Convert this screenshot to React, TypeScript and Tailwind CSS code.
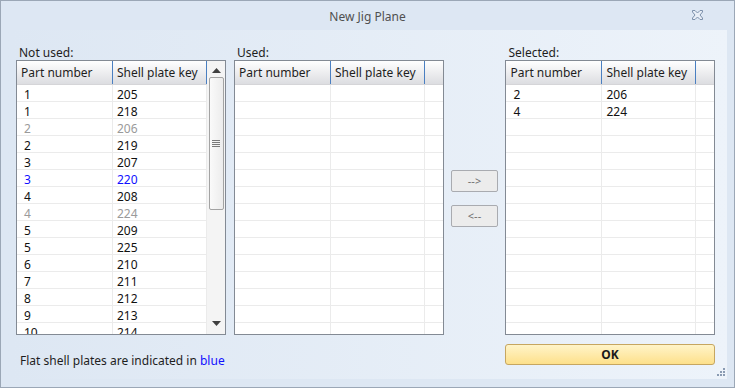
const notUsed: [string, string, string][] = [
  ["1", "205", "n"],
  ["1", "218", "n"],
  ["2", "206", "g"],
  ["2", "219", "n"],
  ["3", "207", "n"],
  ["3", "220", "b"],
  ["4", "208", "n"],
  ["4", "224", "g"],
  ["5", "209", "n"],
  ["5", "225", "n"],
  ["6", "210", "n"],
  ["7", "211", "n"],
  ["8", "212", "n"],
  ["9", "213", "n"],
  ["10", "214", "n"],
];

const selected: [string, string, string][] = [
  ["2", "206", "n"],
  ["4", "224", "n"],
];

const tone = (t: string) =>
  t === "g" ? "text-[#9a9a9a]" : t === "b" ? "text-[#1010ff]" : "text-[#111]";

const Header = ({ extra }: { extra: boolean }) => (
  <div className="flex h-[24px] shrink-0 bg-gradient-to-b from-white to-[#dcdde1] border-b border-[#d5d5d8]">
    <div className="w-[96px] border-r border-[#4a7fc1] pl-[4px] flex items-center">Part number</div>
    <div className="w-[94px] border-r border-[#4a7fc1] pl-[4px] flex items-center">Shell plate key</div>
    {extra && <div className="flex-1" />}
  </div>
);

const Rows = ({ rows, count }: { rows: [string, string, string][]; count: number }) => (
  <div className="flex-1 overflow-hidden">
    {Array.from({ length: count }).map((_, i) => {
      const r = rows[i];
      return (
        <div key={i} className={`flex h-[17px] border-b border-[#ebebeb] ${r ? tone(r[2]) : ""}`}>
          <div className="w-[96px] border-r border-[#ebebeb] pl-[7px] pt-[2px] leading-[16px]">{r?.[0]}</div>
          <div className="w-[94px] border-r border-[#ebebeb] pl-[4px] pt-[2px] leading-[16px]">{r?.[1]}</div>
          <div className="flex-1" />
        </div>
      );
    })}
  </div>
);

const Grid = ({ label, rows, scroll }: { label: string; rows: [string, string, string][]; scroll?: boolean }) => (
  <div className="flex flex-col w-[210px]">
    <div className="h-[16px] pl-[3px] pt-[1px] leading-[16px] text-[#1e1e1e]">{label}</div>
    <div className="h-[275px] border border-[#838a94] bg-white flex overflow-hidden">
      <div className="flex-1 flex flex-col">
        <Header extra={!scroll} />
        <Rows rows={rows} count={15} />
      </div>
      {scroll && (
        <div className="w-[19px] bg-[#f4f4f4] flex flex-col items-center">
          <svg width="9" height="5" className="mt-[7px]" viewBox="0 0 9 5">
            <path d="M0 5 L4.5 0 L9 5 Z" fill="#404040" />
          </svg>
          <div className="mt-[4px] w-[15px] h-[133px] border border-[#a3a3a3] rounded-[2px] bg-gradient-to-r from-[#fafafa] to-[#ececec] flex items-center justify-center">
            <svg width="8" height="7" viewBox="0 0 8 7">
              <path d="M0 0.5H8M0 2.5H8M0 4.5H8M0 6.5H8" stroke="#7a7a7a" strokeWidth="1" />
            </svg>
          </div>
          <div className="flex-1" />
          <svg width="9" height="5" className="mb-[8px]" viewBox="0 0 9 5">
            <path d="M0 0 L9 0 L4.5 5 Z" fill="#404040" />
          </svg>
        </div>
      )}
    </div>
  </div>
);

export default function App() {
  return (
    <div
      className="w-[735px] h-[388px] border border-[#9ba7b6] bg-[#dde7f3] flex flex-col text-[12px] text-[#1e1e1e] overflow-hidden"
      style={{ fontFamily: '"Noto Sans", "Open Sans", sans-serif' }}
    >
      <div className="h-[29px] shrink-0 flex items-center justify-center relative">
        <span className="text-[#505050] pt-[3px]">New Jig Plane</span>
        <svg className="absolute right-[31px] top-[9px]" width="11" height="10" viewBox="0 0 11 10">
          <path
            d="M0.5 0.5H3L5.5 3L8 0.5H10.5V2L8 5L10.5 8V9.5H8L5.5 7L3 9.5H0.5V8L3 5L0.5 2Z"
            fill="#e8eef6"
            stroke="#7d91ab"
            strokeWidth="1"
          />
        </svg>
      </div>
      <div className="mx-[7px] h-[349px] bg-gradient-to-r from-[#dde7f3] to-[#edf3fa] flex flex-col pl-[8px] pr-[12px] pt-[14px] relative">
        <div className="flex">
          <Grid label="Not used:" rows={notUsed} scroll />
          <div className="w-[8px]" />
          <Grid label="Used:" rows={[]} />
          <div className="w-[62px] flex flex-col items-center pt-[126px]">
            <button className="w-[47px] h-[22px] border border-[#a9abb0] rounded-[2px] bg-[#ececec] text-[11px] text-[#707070]">
              --&gt;
            </button>
            <button className="mt-[13px] w-[47px] h-[22px] border border-[#a9abb0] rounded-[2px] bg-[#ececec] text-[11px] text-[#707070]">
              &lt;--
            </button>
          </div>
          <Grid label="Selected:" rows={selected} />
        </div>
        <div className="flex mt-[9px]">
          <div className="flex-1 pl-[4px] pt-[8px]">
            Flat shell plates are indicated in <span className="text-[#1010ff]">blue</span>
          </div>
          <button className="w-[210px] h-[21px] border border-[#c6a660] rounded-[3px] bg-gradient-to-b from-[#fff4c8] to-[#fde08a] font-bold text-[12px] text-[#1a1a1a]">
            OK
          </button>
        </div>
        <svg className="absolute right-[2px] bottom-[3px]" width="9" height="9" viewBox="0 0 9 9">
          <g fill="#8a9bb2">
            <rect x="7" y="1" width="2" height="2" />
            <rect x="4" y="4" width="2" height="2" />
            <rect x="7" y="4" width="2" height="2" />
            <rect x="1" y="7" width="2" height="2" />
            <rect x="4" y="7" width="2" height="2" />
            <rect x="7" y="7" width="2" height="2" />
          </g>
        </svg>
      </div>
    </div>
  );
}
